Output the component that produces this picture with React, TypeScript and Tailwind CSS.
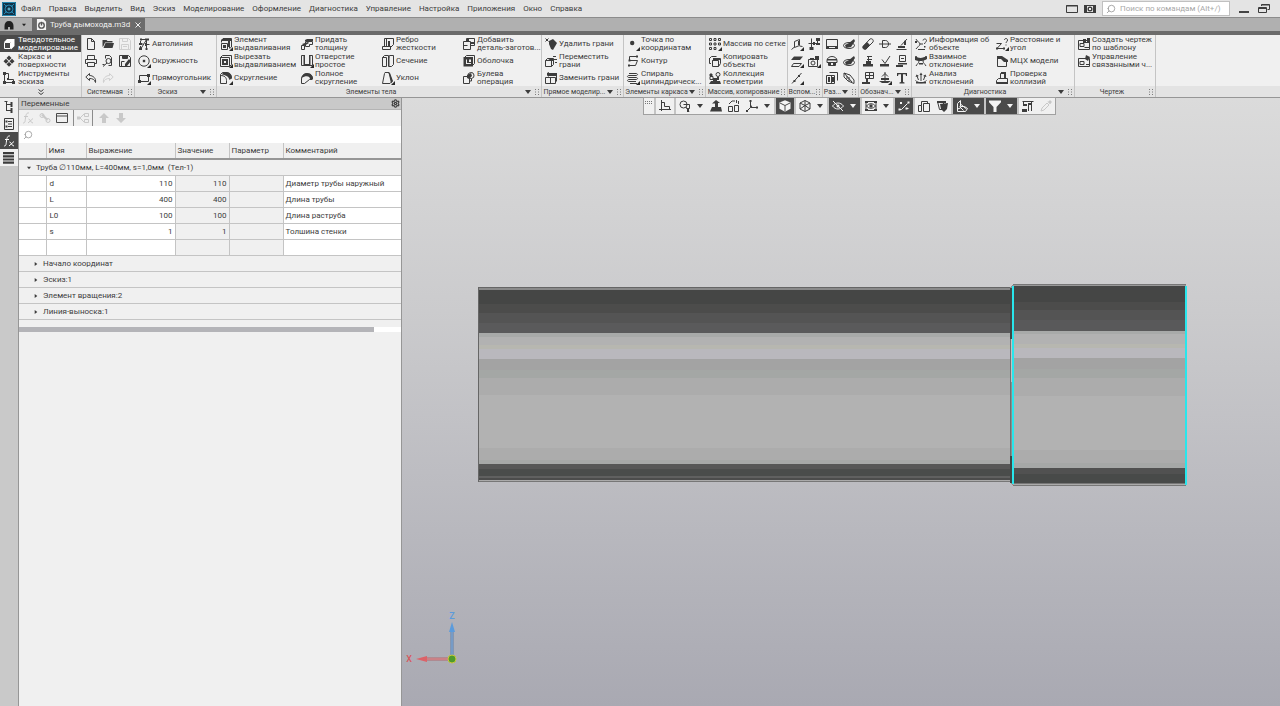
import { useState } from 'react';
import { Settings, Search } from 'lucide-react';

type Shape = { s?: string; f?: string; w?: string; k?: string };

// Контуры значков на сетке 12x12: s - линии, f - заливка, w - светлая заливка, k - темные линии поверх
const shapes: Record<string, Shape> = {
  solid: { s: 'M1.5 4.5h6v6h-6z', f: 'M1 4l3-3h7.5v7L8 11.5V4z' },
  surface: { f: 'M6 .5L8.5 3 6 5.5 3.5 3zM3 3.7l2.5 2.5L3 8.7.5 6.2zM9 3.7l2.5 2.5L9 8.7 6.5 6.2zM6 6.9l2.5 2.3L6 11.7 3.5 9.2z' },
  sketch: { s: 'M1.5 1.5h4v6h5v3h-9z', f: 'M0 0h3v3H0zM0 9h3v3H0zM9 9h3v3H9zM4 6h2v2H4z' },
  file: { s: 'M2.5.5h4l3 3v8h-7zM6.5.5v3h3' },
  open: { f: 'M.5 2h4l1 1h5v1.5H3L1.5 8 .5 9zM3.5 5H12l-1.5 5H1.5z' },
  save: { s: 'M.5.5h9l2 2v9H.5zM3.5.5v3h5v-3M2.5 11.5v-5h7v5M4 8.5h4' },
  print: { s: 'M2.5 4.5v-4h7v4M2.5 8.5h-2v-4h11v4h-2M2.5 7.5h7v4h-7z' },
  preview: { s: 'M3.5 3.5v-3h4l2 2v8h-3M4 6a2.5 2.5 0 105 0a2.5 2.5 0 10-5 0M5 8l-4 3.5M.5 9.5h2' },
  saveas: { s: 'M.5.5h9l2 2v9H.5zM3.5.5v3h5v-3M2.5 11.5v-5h3', f: 'M10 4l2 2-4 5-2 1V9zM4 1h4v2H4z' },
  undo: { s: 'M4.5 1.5L.8 5l3.7 3.5v-2c3 0 5 .8 6 4 .8-4-2.2-7-6-7z' },
  redo: { s: 'M7.5 1.5L11.2 5 7.5 8.5v-2c-3 0-5 .8-6 4-.8-4 2.2-7 6-7z' },
  auto: { s: 'M4 1.5h3M2.5 3v3h3M8.5 2v9M8.5 6.5h3M3 10.5l5-8M2.5 8v3', f: 'M2 .5h2v2H2zM7 .5h4v2H7zM1 5h3v2H1zM1 9.5h3V12H1zM7 5h2v3H7zM7.5 10h2v2h-2z' },
  circle: { s: 'M.8 6a5.2 5.2 0 1010.4 0a5.2 5.2 0 10-10.4 0', f: 'M4.8 4.8h2.4v2.4H4.8z' },
  rect: { s: 'M1.5 3.5h9v6h-9z', f: 'M0 8h3v3H0zM9 2h3v3H9z' },
  extrude: { s: 'M1.5 5.5h6v6h-6zM1.5 4.5V2L3 .5h8.5V9l-2 1.5M9.5 10V2.5h-7', f: 'M2 1h9v2H2zM8 3h2v6H8zM3 7h3v3H3z' },
  cutout: { s: 'M.5 2.5l2-2h9v9l-2 2h-9zM.5 2.5h9v9', f: 'M2 4h6v6H2z', w: 'M4 6h2v2H4z' },
  fillet: { s: 'M.5 11.5v-9l2-2H6c3 0 5.5 2.5 5.5 6M.5 11.5h6v-3c0-3-2-5-6-5', f: 'M3 0h3c4 0 6 3 6 6L9.5 8C9 5 6 3 2 2.5z' },
  thick: { s: 'M4.5 3.5h7v3h-3v2h-4zM.5 7.5h3v4h-3z', f: 'M4 2l2-1h6v2H4zM1 6l6-2 1 1-5 3z' },
  hole: { s: 'M.5.5h3v10h-3zM8.5.5h3v10h-3zM3.5 3v7.5h5V3', f: 'M2.5 0H4v11H2.5zM8 0h1.5v11H8zM4 9h4v2H4z' },
  fullFillet: { s: 'M.5 11.5V7c0-3 2-5 5-5h2c2 0 4 2 4 5M.5 11.5h3l5-4h3', f: 'M.5 6C1 3 3 1 6 1c4 0 6 3 6 6H9C9 4 5 3 .5 6z' },
  rib: { s: 'M2.5 8.5v-8h9v6l-3 3M.5 8.5h8v3h-8zM4.5.5v8', f: 'M6 3h2v5H6zM2 8h7v1H2z' },
  section: { s: 'M.5 2.5h4v9h-4zM6.5 3.5l1-3h4v9l-2 2h-3zM.5 2.5l2-2h4v8', f: 'M6 2h1.5v9H6z' },
  draft: { s: 'M3 .5h4l3 9-2 2H.5l2-10z', f: 'M6 0l2 1 3 8-2 2.5-2-9z' },
  blank: { s: 'M.5 3.5h7v8h-7zM3.5 3.5v-3h8v7h-4M.5 7.5h4', f: 'M4 0h2v4h5.5v2H8V4H4z' },
  shell: { s: 'M1.5 2.5l2-2h8v8l-2 2', f: 'M.5 2H10v9.5H.5z', w: 'M3 4.5h1V9H3zM4 8h4v1H4zM6 4.5h2V7H6z' },
  bool: { s: 'M.5 4.5h6v7h-6zM5 4a3 3 0 106-1a3 3 0 00-6 1M6.5 9h2V6.5', f: 'M4 3l4-2 1 3-3 3-2-1z' },
  delFace: { s: 'M.5.5l3 3M3.5.5l-3 3', f: 'M4 3l4-2 4 4-4 7-2-1-2-5z' },
  moveFace: { s: 'M.5 5.5h6v6h-6zM.5 5.5l2-2h6v6l-2 2M8 1.5h3M9 4.5h3M10 7.5h2', f: 'M2 3h6v3H6z' },
  swapFace: { s: 'M.5 5.5h10v6H.5zM2.5 3.5h9v6M5.5 5.5v6', f: 'M2 1l2-1v1h8v3H4v1L2 3z' },
  point: { f: 'M3 5a2.2 2.2 0 104.4 0a2.2 2.2 0 10-4.4 0' },
  contour: { s: 'M11 1.5H2.5v4h8l-2 5H2', f: 'M9 .5h2v2H9zM1 9.5h2v2H1zM1.5 4.5h2v2h-2z' },
  spiral: { s: 'M2 1.5h7c2 0 2 2 0 2H2c-2 0-2 2 0 2h7c2 0 2 2 0 2H2c-2 0-2 2 0 2h7M3 11.5h7' },
  array: { s: 'M.5.5h2v2h-2zM5 .5h2v2H5zM9.5.5h2v2h-2zM.5 5h2v2h-2zM5 5h2v2H5zM9.5 5h2v2h-2zM.5 9.5h2v2h-2zM5 9.5h2v2H5z' },
  copy: { s: 'M3.5 5.5l2-2h6v5l-2 3h-6zM3.5 5.5h6v6M.5 3v5.5H2M.5 3.5l2-2h5', f: 'M4 3h7v2H4z' },
  collect: { s: 'M7 2.5a2 2 0 104 0a2 2 0 10-4 0M1 4.5h3v3H1z', f: 'M0 3l2-2 2 2-2 2zM4 6h4v3H4zM2 9h9l1 3H0zM8 5h2v3H8z' },
  plane: { s: 'M3.5 3.5l5-2v6l-5 2zM.5 11.5l3-2.5M8.5 8l3 .5', f: 'M7 3h2v4H7z' },
  csys: { s: 'M3.5.5v9M.5 5.5h9M9.5 1v6', f: 'M1.5 9h4v3h-4zM5 4h2v3H5zM8 0h4v3H8zM8 5h4v2H8z' },
  layers: { s: 'M2.5 8.5h8L8 11.5H.5z', f: 'M3 1.5h9L9 5H0z' },
  camera: { s: 'M.5 4.5h9v7h-9zM3 8a2 2 0 104 0a2 2 0 10-4 0', f: 'M2 3h4v2H2zM7 1h4v4H7z' },
  axis: { s: 'M1 11.5L10.5 1', f: 'M2.5 8h2v2h-2zM7 3h2v2H7z' },
  monitor: { s: 'M.5 1.5h11v9H.5z', f: 'M0 8h3v3H0zM9 8h3v3H9zM2 8h8v1H2z' },
  disc: { s: 'M.5 7.5a5.5 3 0 1011 0a5.5 3 0 10-11 0', f: 'M2 7l4-2 5-4 1 2-4 6-5 1z' },
  helm: { s: 'M1 5.5a5 4 0 0110 0v2H1zM2.5 8v2.5h7V8', f: 'M1 4h10v1.5H1zM3 7h2v3H3zM7 7h2v3H7z' },
  stack: { s: 'M.5 3.5h8v8h-8zM3.5.5h8v8M5.5 3v8', f: 'M2 5h2v5H2zM6 5h2v5H6z' },
  leaf: { s: 'M1 1l6 2 4 5v3.5L5 9 1 5zM1 1l8 9M4 4v3M6 5v4' },
  pin: { s: 'M1 8.5L8 1c2-1 4 1 3 3l-7 7c-2 1-4-1-3-2.5z', f: 'M1 8l4-4 3 3-4 4.5C2 12 0 10 1 8z' },
  dim: { s: 'M3.5 2.5h3c4 0 4 7 0 7h-3zM0 6h12' },
  rough: { s: 'M.5 11.5h10M5 7.5L11 1', f: 'M2 8h7v2H2zM8 3l2-1v5H8z' },
  mark: { s: 'M5 1.5h5M5 4.5h5M6.5 1v7', f: 'M1 9h10v2.5H1zM4 6h5v3H4z' },
  check: { s: 'M3 4.5l3 4L11 1', f: 'M1 9h9v2.5H1z' },
  stamp: { s: 'M3.5.5h6v6h-6zM5 3.5h3', f: 'M2 8h9v1.5H2zM0 10h7v2H0z' },
  table: { s: 'M3.5.5h8v6h-8zM3.5 3.5h8M7.5.5v6', f: 'M4 7h2v3H4zM0 10h8v2H0z' },
  weld: { s: 'M6 0v10M3 4.5l3-3 3 3', f: 'M2 6h8v2H2zM0 9h12l-3 2H3z' },
  textTool: { f: 'M1 1h10v3h-1L9.5 2.2H7V10l1.5.5v1h-5v-1L5 10V2.2H2.5L2 4H1z' },
  info: { s: 'M1 1c1 3 4 3 4 5s-3 3-4 5M5 6h3M8 2.5c0-2 3.5-2 3.5 0S9.5 4 9.5 6M3 11.5h7', f: 'M0 3h2v2H0zM9 8h1.5v1.5H9z' },
  mutual: { s: 'M1 1c1 3 3 3 3 5s-2 3-3 5M11 1C10 4 8 4 8 6s2 3 3 5', f: 'M0 1c4 3 8 2 12 0v3C8 6.500 3 6.500 0 5zM4 8h4v1.5H4z' },
  deviation: { s: 'M.5 8.5c3 3 8 3 11 0M3.5 8L2 4M6 9V2M8.5 8L10 4', f: 'M.5 5l1-2.5L4 4zM4.5 3L6 .5 7.5 3zM8 4l2.5-1.5 1 2.5zM1 10h10v1.5H1z' },
  distance: { s: 'M.5 5.5h5L1 10.5h7M8.5 2c0-2 3-2 3 0S10 3.5 10 5', f: 'M9.5 6.5h1v1h-1zM0 9.5h2v2H0zM7 9.5h2v2H7z' },
  mcx: { s: 'M1.5 3.5v8h9V5', f: 'M1 1h5l6 4v2H8L5 4H1z' },
  collide: { s: 'M4.5 1.5h5v5h-5zM.5 8.5l2-2h9v4l-1 1H.5z', f: 'M5 0h5v7H8V2H5zM1 10h11v2H1z' },
  drawing: { s: 'M.5 2.5h11v9H.5zM2 5.5h4v3H2zM6.5 9.5h5', f: 'M5 1h3v4H5zM9 0h3v5H9zM7 4h4v1H7z' },
  linked: { s: 'M.5 3.5h11v8H.5zM2 6.5h4v3H2zM8 9.5h3', f: 'M8 0l4 2-2 4-3-2z' },
  axes: { s: 'M2.5 0v11M0 9.5h12M2.5 2.5h3v4h5v3' },
  zoomBox: { s: 'M1 4.5a3.5 3.5 0 107 0a3.5 3.5 0 10-7 0M7 7l3 4.5M4.5 4.5h6v4h-3', f: 'M8 9h2v3H8z' },
  orient: { f: 'M6 0l4 3H8v4h3l1 4.5H0L2 7h3V3.5H2z' },
  rotate: { s: 'M.5 6.5h4v5h-4zM6.5 5.5h4v6h-4zM8.5 0v3M10.5 1v3M1 4l3-3h3' },
  triad: { s: 'M4.5 1v6.5L1 11M4.5 7.5H11', f: 'M3.5 0h2v2h-2zM10 6.5h2v2h-2zM0 10h2v2H0zM5 5l2 3H5z' },
  cube: { f: 'M6 .3l5.5 2.2v6.3L6 11.7.5 8.8V2.5z', k: 'M1 3l5 2.5L11 3M6 5.5v6' },
  wire: { s: 'M6 .5L11 3v6l-5 2.5L1 9V3zM1 3l5 2.5L11 3M6 .5v11M1 9l5-3.5L11 9' },
  eyeOff: { s: 'M.5 6c3-4 8-4 11 0-3 4-8 4-11 0zM1 1l10 10', f: 'M4.5 6a1.5 1.5 0 103 0a1.5 1.5 0 10-3 0' },
  eyeBox: { s: 'M1 1.5h10v9H1zM1.5 6c2-3 7-3 9 0-2 3-7 3-9 0z', f: 'M0 1h3v2H0zM9 1h3v2H9zM0 9h3v2H0zM9 9h3v2H9zM4.5 4.5h3v3h-3z' },
  snap: { s: 'M1.5 9.5h2l6-6M8.5 8.5h2', f: 'M.5 8.5h2v2h-2zM2 2h2v2H2zM9.5 1.5h2v2h-2zM7.5 7.5h2v2h-2z' },
  boxes: { s: 'M.5 5.5h3v6h-3zM5.5 3.5h6v8h-6zM3.5 5.5v-4h6v2' },
  mask: { s: 'M1.5 1.5h6v8h-4z', f: 'M1 1h9v2H1zM4 4l8-1-1 6-3 3-3-3z' },
  ruler: { s: 'M1.5 3.5l3-3v6h4l3 2-2 3h-8zM4.5 4l6 5M3.5 6.5l4 4M1.5 9l3-1' },
  funnel: { f: 'M0 .5h12v1.8L7.5 7v5h-3V7L0 2.3z' },
  props: { s: 'M.5 1.5h11M1.5 2v4M6.5 4v7M9.5 2v9', f: 'M1 4h4v2H1zM0 9h5v3H0zM6 3h4v2H6z' },
  dropper: { s: 'M1 11l1-3 5-5 2 2-5 5zM8 1.5l2.5 2.5', f: 'M8 2l2-2 2 2-2 2z' },
  tree: { s: 'M3.5 0v10M3.5 3.5h5M3.5 9.5h5M1.5.5h3', f: 'M7.5 1h2v5h-2zM7.5 7h2v5h-2z' },
  list: { s: 'M1.5.5h9v11h-9zM5 3.5h4M5 6h4M5 8.5h4', f: 'M2.5 2.5h2v2h-2zM2.5 7.5h2v2h-2z' },
  bars: { f: 'M0 0h11v2.2H0zM0 3.2h11v2.2H0zM0 6.4h11v2.2H0zM0 9.6h11v2.2H0z' },
  fx: { s: 'M1 11c2 0 2-1 2.5-5S5 .5 7 1M2 4.5h4M6.5 7c2 0 2 4 4.5 4M11 6.5l-5 4.5' },
  link: { s: 'M1 3.5a2 2 0 104 0a2 2 0 10-4 0M7 8.5a2 2 0 104 0a2 2 0 10-4 0M4.5 5l3 2', f: 'M2 3l2-1 5 5-1 2z' },
  window: { s: 'M.5 1.5h11v9H.5zM.5 4h11' },
  graph: { s: 'M3 6l4-4M3 6l4 4M7.5 1.5h4v3h-4zM7.5 7.5h4v3h-4z', f: 'M0 4.5h3v3H0z' },
  up: { f: 'M6 1l5 5H8v5H4V6H1z' },
  down: { f: 'M6 11L1 6h3V1h4v5h3z' },
  screen: { s: 'M.5 2.5h11v7H.5z', f: 'M.5 2h11v1.5H.5z' },
  gearBox: { s: 'M.5 2.5h11v7H.5z', f: 'M0 2h3v8H0zM9 2h3v8H9zM3.5 6a2.5 2.5 0 105 0a2.5 2.5 0 10-5 0', w: 'M5 5h2v2H5z' },
  restore: { s: 'M3.5 3V1.5h8v5h-2M.5 4.5h8v5h-8zM.5 5.5h8M3.5 2h8' },
};

function Glyph({ name, more, className = '' }: { name: string; more?: boolean; className?: string }) {
  const shape = shapes[name];
  return (
    <svg viewBox="0 0 12 12" className={`h-3 w-3 shrink-0 overflow-visible ${className}`} aria-hidden="true">
      {shape.s && <path d={shape.s} fill="none" stroke="currentColor" strokeWidth="1" />}
      {shape.f && <path d={shape.f} fill="currentColor" />}
      {shape.w && <path d={shape.w} fill="#f0f0f0" />}
      {shape.k && <path d={shape.k} fill="none" stroke="#4a4a4a" strokeWidth="1" />}
      {more && <path d="M13 9v4H9z" fill="#2a2a2a" />}
    </svg>
  );
}

function Caret({ className = 'w-1.5' }: { className?: string }) {
  return (
    <svg viewBox="0 0 6 4" className={`h-1 shrink-0 ${className}`} aria-hidden="true">
      <path d="M0 0h6L3 4z" fill="currentColor" />
    </svg>
  );
}

function Grip() {
  return (
    <svg viewBox="0 0 4 6" className="h-1.5 w-1 shrink-0 text-[#7c7c7c]" aria-hidden="true">
      <path d="M0 0h1v1H0zM3 0h1v1H3zM0 2.5h1v1H0zM3 2.5h1v1H3zM0 5h1v1H0zM3 5h1v1H3z" fill="currentColor" />
    </svg>
  );
}

const menu = [
  'Файл', 'Правка', 'Выделить', 'Вид', 'Эскиз', 'Моделирование', 'Оформление',
  'Диагностика', 'Управление', 'Настройка', 'Приложения', 'Окно', 'Справка',
];

interface Tool {
  icon: string;
  label?: string[];
  title?: string;
  more?: boolean;
  off?: boolean;
}

interface Group {
  caption: string;
  width: string;
  drop?: boolean;
  tools: Tool[];
}

// Инструменты перечислены по столбцам, по три в каждом
const groups: Group[] = [
  {
    caption: 'Системная',
    width: 'w-[53px]',
    tools: [
      { icon: 'file', title: 'Создать' },
      { icon: 'print', title: 'Печать' },
      { icon: 'undo', title: 'Отменить' },
      { icon: 'open', title: 'Открыть' },
      { icon: 'preview', title: 'Предварительный просмотр' },
      { icon: 'redo', title: 'Повторить', off: true },
      { icon: 'save', title: 'Сохранить', off: true },
      { icon: 'saveas', title: 'Сохранить как' },
    ],
  },
  {
    caption: 'Эскиз',
    width: 'w-[82px]',
    drop: true,
    tools: [
      { icon: 'auto', label: ['Автолиния'] },
      { icon: 'circle', label: ['Окружность'], more: true },
      { icon: 'rect', label: ['Прямоугольник'], more: true },
    ],
  },
  {
    caption: 'Элементы тела',
    width: 'w-[325px]',
    drop: true,
    tools: [
      { icon: 'extrude', label: ['Элемент', 'выдавливания'], more: true },
      { icon: 'cutout', label: ['Вырезать', 'выдавливанием'], more: true },
      { icon: 'fillet', label: ['Скругление'], more: true },
      { icon: 'thick', label: ['Придать', 'толщину'] },
      { icon: 'hole', label: ['Отверстие', 'простое'], more: true },
      { icon: 'fullFillet', label: ['Полное', 'скругление'] },
      { icon: 'rib', label: ['Ребро', 'жесткости'] },
      { icon: 'section', label: ['Сечение'] },
      { icon: 'draft', label: ['Уклон'], more: true },
      { icon: 'blank', label: ['Добавить', 'деталь-заготов...'] },
      { icon: 'shell', label: ['Оболочка'] },
      { icon: 'bool', label: ['Булева', 'операция'] },
    ],
  },
  {
    caption: 'Прямое моделир...',
    width: 'w-[82px]',
    drop: true,
    tools: [
      { icon: 'delFace', label: ['Удалить грани'] },
      { icon: 'moveFace', label: ['Переместить', 'грани'] },
      { icon: 'swapFace', label: ['Заменить грани'] },
    ],
  },
  {
    caption: 'Элементы каркаса',
    width: 'w-[82px]',
    drop: true,
    tools: [
      { icon: 'point', label: ['Точка по', 'координатам'], more: true },
      { icon: 'contour', label: ['Контур'] },
      { icon: 'spiral', label: ['Спираль', 'цилиндрическ...'], more: true },
    ],
  },
  {
    caption: 'Массив, копирование',
    width: 'w-[82px]',
    tools: [
      { icon: 'array', label: ['Массив по сетке'], more: true },
      { icon: 'copy', label: ['Копировать', 'объекты'] },
      { icon: 'collect', label: ['Коллекция', 'геометрии'] },
    ],
  },
  {
    caption: 'Вспом...',
    width: 'w-[35px]',
    tools: [
      { icon: 'plane', title: 'Плоскость', more: true },
      { icon: 'layers', title: 'Смещенная плоскость', more: true },
      { icon: 'axis', title: 'Ось', more: true },
      { icon: 'csys', title: 'Система координат' },
      { icon: 'camera', title: 'Вид', more: true },
    ],
  },
  {
    caption: 'Раз...',
    width: 'w-[36px]',
    drop: true,
    tools: [
      { icon: 'monitor', title: 'Разместить' },
      { icon: 'helm', title: 'Зона' },
      { icon: 'stack', title: 'Слои' },
      { icon: 'disc', title: 'Диск' },
      { icon: 'disc', title: 'Диск со смещением' },
      { icon: 'leaf', title: 'Разнести' },
    ],
  },
  {
    caption: 'Обознач...',
    width: 'w-[53px]',
    drop: true,
    tools: [
      { icon: 'pin', title: 'Резьба' },
      { icon: 'mark', title: 'База' },
      { icon: 'table', title: 'Допуск формы' },
      { icon: 'dim', title: 'Размер' },
      { icon: 'check', title: 'Клеймение' },
      { icon: 'weld', title: 'Сварка', more: true },
      { icon: 'rough', title: 'Шероховатость' },
      { icon: 'stamp', title: 'Маркировка' },
      { icon: 'textTool', title: 'Текст' },
    ],
  },
  {
    caption: 'Диагностика',
    width: 'w-[163px]',
    drop: true,
    tools: [
      { icon: 'info', label: ['Информация об', 'объекте'] },
      { icon: 'mutual', label: ['Взаимное', 'отклонение'] },
      { icon: 'deviation', label: ['Анализ', 'отклонений'] },
      { icon: 'distance', label: ['Расстояние и', 'угол'], more: true },
      { icon: 'mcx', label: ['МЦХ модели'] },
      { icon: 'collide', label: ['Проверка', 'коллизий'] },
    ],
  },
  {
    caption: 'Чертеж',
    width: 'w-[81px]',
    tools: [
      { icon: 'drawing', label: ['Создать чертеж', 'по шаблону'] },
      { icon: 'linked', label: ['Управление', 'связанными ч...'] },
    ],
  },
];

const modes = [
  { icon: 'solid', label: ['Твердотельное', 'моделирование'] },
  { icon: 'surface', label: ['Каркас и', 'поверхности'] },
  { icon: 'sketch', label: ['Инструменты', 'эскиза'] },
];

function Lines({ lines }: { lines: string[] }) {
  return (
    <span className="flex flex-col text-left leading-[8px]">
      {lines.map((line) => (
        <span key={line}>{line}</span>
      ))}
    </span>
  );
}

function RibbonGroup({ group }: { group: Group }) {
  return (
    <section aria-label={group.caption} className={`flex shrink-0 flex-col border-r border-[#c4c4c4] ${group.width}`}>
      <div className="grid h-[51px] auto-cols-fr grid-flow-col grid-rows-3">
        {group.tools.map((tool) =>
          tool.label ? (
            <button key={tool.icon} type="button" className="flex min-w-0 items-center gap-0.5 pl-[3px] whitespace-nowrap hover:bg-white">
              <Glyph name={tool.icon} more={tool.more} />
              <Lines lines={tool.label} />
            </button>
          ) : (
            <button
              key={tool.title}
              type="button"
              aria-label={tool.title}
              className={`flex items-center justify-center hover:bg-white ${tool.off ? 'text-[#cfcfcf]' : ''}`}
            >
              <Glyph name={tool.icon} more={tool.more} />
            </button>
          ),
        )}
      </div>
      <div className="flex h-[11px] items-center bg-[#e3e3e3] pr-0.5 text-[7px] leading-[10px]">
        <span className="flex-1 text-center whitespace-nowrap">{group.caption}</span>
        {group.drop && <Caret className="mr-1 w-1.5" />}
        <Grip />
      </div>
    </section>
  );
}

interface ViewItem {
  icon: string;
  title: string;
  drop?: boolean;
  off?: boolean;
}

const viewGroups: { dark?: boolean; items: ViewItem[] }[] = [
  { items: [{ icon: 'axes', title: 'Ориентация эскиза' }] },
  {
    items: [
      { icon: 'zoomBox', title: 'Масштаб', drop: true },
      { icon: 'orient', title: 'Нормально к' },
      { icon: 'rotate', title: 'Повернуть' },
      { icon: 'triad', title: 'Ориентация', drop: true },
    ],
  },
  { dark: true, items: [{ icon: 'cube', title: 'Полутоновое' }] },
  { items: [{ icon: 'wire', title: 'Каркас', drop: true }] },
  { dark: true, items: [{ icon: 'eyeOff', title: 'Скрыть', drop: true }] },
  { items: [{ icon: 'eyeBox', title: 'Показать', drop: true }] },
  { dark: true, items: [{ icon: 'snap', title: 'Привязки' }] },
  { items: [{ icon: 'boxes', title: 'Компоненты' }, { icon: 'mask', title: 'Сечение модели' }] },
  { dark: true, items: [{ icon: 'ruler', title: 'Измерения', drop: true }] },
  { dark: true, items: [{ icon: 'funnel', title: 'Фильтры', drop: true }] },
  { items: [{ icon: 'props', title: 'Свойства' }, { icon: 'dropper', title: 'Пипетка', off: true }] },
];

function ViewToolbar() {
  return (
    <div role="toolbar" aria-label="Вид" className="flex h-[18px] gap-0.5 border border-[#a0a0a0] bg-[#c4c4c4]">
      <div className="flex w-[10px] justify-center bg-[#f0f0f0] pt-[3px]">
        <svg viewBox="0 0 8 3" className="h-[3px] w-2 text-[#777]" aria-hidden="true">
          <path d="M0 0h1v1H0zM2 0h1v1H2zM4 0h1v1H4zM6 0h1v1H6zM0 2h1v1H0zM2 2h1v1H2zM4 2h1v1H4zM6 2h1v1H6z" fill="currentColor" />
        </svg>
      </div>
      {viewGroups.map((group) => (
        <div
          key={group.items[0].icon}
          className={`flex ${group.dark ? 'bg-[#4a4a4a] text-[#f4f4f4]' : 'bg-[#f0f0f0] text-[#3c3c3c]'}`}
        >
          {group.items.map((item) => (
            <button
              key={item.icon}
              type="button"
              aria-label={item.title}
              className={`flex items-center ${item.off ? 'text-[#c8c8c8]' : ''}`}
            >
              <span className="flex w-[18px] justify-center">
                <Glyph name={item.icon} />
              </span>
              {item.drop && (
                <span className="flex w-[13px] justify-center">
                  <Caret />
                </span>
              )}
            </button>
          ))}
        </div>
      ))}
    </div>
  );
}

const variables = [
  { name: 'd', expr: '110', value: '110', comment: 'Диаметр трубы наружный' },
  { name: 'L', expr: '400', value: '400', comment: 'Длина трубы' },
  { name: 'L0', expr: '100', value: '100', comment: 'Длина раструба' },
  { name: 's', expr: '1', value: '1', comment: 'Толшина стенки' },
  { name: '', expr: '', value: '', comment: '' },
];

const branches = ['Начало координат', 'Эскиз:1', 'Элемент вращения:2', 'Линия-выноска:1'];

function VariablesPanel() {
  const [query, setQuery] = useState('');

  return (
    <aside className="flex w-[384px] shrink-0 flex-col border-r border-l border-[#969696] bg-[#f0f0f0]">
      <header className="flex h-3 items-center justify-between border-b border-[#b4b4b4] bg-[#c9c9c9] pr-px pl-0.5">
        <h2>Переменные</h2>
        <button type="button" aria-label="Настройка панели">
          <Settings className="h-[9px] w-[9px]" strokeWidth={3} />
        </button>
      </header>
      <div className="flex h-4 items-center gap-[5px] pl-[3px] text-[#c9c9c9]">
        <button type="button" aria-label="Вставить функцию"><Glyph name="fx" /></button>
        <button type="button" aria-label="Вставить ссылку"><Glyph name="link" /></button>
        <button type="button" aria-label="Окно" className="text-[#4a4a4a]"><Glyph name="window" /></button>
        <button type="button" aria-label="Зависимости" className="flex h-4 items-center border-x border-[#8c8c8c] px-[3px]"><Glyph name="graph" /></button>
        <button type="button" aria-label="Выше"><Glyph name="up" /></button>
        <button type="button" aria-label="Ниже"><Glyph name="down" /></button>
      </div>
      <label className="flex h-[17px] items-center gap-1 bg-white pl-1">
        <Search className="h-2.5 w-2.5 -scale-x-100 text-[#9a9a9a]" />
        <input
          aria-label="Поиск переменной"
          value={query}
          onChange={(e) => setQuery(e.target.value)}
          className="min-w-0 flex-1 outline-none"
        />
      </label>

      <table className="w-full table-fixed border-collapse text-left">
        <colgroup>
          <col className="w-[27px]" />
          <col className="w-10" />
          <col className="w-[89px]" />
          <col className="w-[54px]" />
          <col className="w-[54px]" />
          <col />
        </colgroup>
        <thead>
          <tr className="h-4 border-b-2 border-[#969696]">
            <th aria-label="Статус" />
            {['Имя', 'Выражение', 'Значение', 'Параметр', 'Комментарий'].map((title) => (
              <th key={title} className="border-l border-l-[#c4c4c4] p-0 pt-px pl-0.5 font-normal">{title}</th>
            ))}
          </tr>
        </thead>
        <tbody>
          <tr className="h-4 border-b border-[#c4c4c4]">
            <td colSpan={6} className="p-0 pt-px pl-2">
              <button type="button" className="flex items-center gap-[5px]">
                <Caret className="w-1" />
                <span className="whitespace-pre">Труба ∅110мм, L=400мм, s=1,0мм  (Тел-1)</span>
              </button>
            </td>
          </tr>
          {variables.map((row) => (
            <tr key={row.name} className="h-4 border-b border-[#c4c4c4] bg-white">
              <td className="p-0" />
              <td className="border-l border-[#c4c4c4] p-0 pt-px pl-[3px]">{row.name}</td>
              <td className="border-l border-[#c4c4c4] p-0 pt-px pr-0.5 text-right">{row.expr}</td>
              <td className="border-l border-[#c4c4c4] bg-[#f0f0f0] p-0 pt-px pr-0.5 text-right">{row.value}</td>
              <td className="border-l border-[#c4c4c4] bg-[#f0f0f0] p-0" />
              <td className="border-l border-[#c4c4c4] p-0 pt-px pl-0.5">{row.comment}</td>
            </tr>
          ))}
          {branches.map((branch) => (
            <tr key={branch} className="h-4 border-b border-[#c4c4c4]">
              <td colSpan={6} className="p-0 pt-px pl-[15px]">
                <button type="button" className="flex items-center gap-[5px]">
                  <Caret className="w-1 -rotate-90" />
                  {branch}
                </button>
              </td>
            </tr>
          ))}
        </tbody>
      </table>
      <div className="mt-[7px] bg-white">
        <div className="h-[5px] w-[93%] bg-[#b4b4b8]" />
      </div>
    </aside>
  );
}

// Полосы освещенности: нижняя граница и цвет
const pipeBands: [number, string][] = [
  [288, '#666666'], [290, '#8a8a8a'], [304, '#454645'], [313, '#4c4c4b'], [323, '#545454'], [333, '#5a5a5b'],
  [337, '#a8aaa9'], [345, '#b2b2b2'], [349, '#b7b7b0'], [359, '#b9b8bd'], [370, '#a3a3a3'], [378, '#a4a7a5'],
  [395, '#acacac'], [448, '#b2b2b2'], [460, '#acacac'], [464, '#a6a8a7'], [469, '#565656'], [476, '#4a4c4b'],
  [478, '#606060'], [480, '#4c4c4c'], [481, '#aaaaaa'], [482, '#777777'],
];
const socketBands: [number, string][] = [
  [285, '#777777'], [286, '#999999'], [302, '#454645'], [310, '#4c4c4b'], [320, '#545454'], [331, '#59595a'],
  [334, '#a8aaa9'], [344, '#b2b2b2'], [348, '#b7b7b0'], [358, '#b9b8bd'], [369, '#a3a3a3'], [378, '#a4a7a5'],
  [396, '#acacac'], [450, '#b2b2b2'], [463, '#acacac'], [468, '#a6a8a7'], [474, '#515151'], [483, '#484a49'],
  [484, '#777777'], [485, '#aaaaaa'], [486, '#777777'],
];

function Bands({ bands, top, x, width }: { bands: [number, string][]; top: number; x: number; width: number }) {
  return (
    <g shapeRendering="crispEdges">
      {bands.map(([bottom, color], i) => {
        const y = i === 0 ? top : bands[i - 1][0];
        return <rect key={bottom} x={x} y={y} width={width} height={bottom - y} fill={color} />;
      })}
    </g>
  );
}

function Model() {
  return (
    <svg viewBox="402 98 878 608" className="absolute inset-0 h-full w-full" role="img" aria-label="Труба дымохода">
      <Bands bands={pipeBands} top={287} x={478} width={533} />
      <path d="M478.5 287v195" stroke="#666" />
      <Bands bands={socketBands} top={284} x={1013} width={173} />
      <g shapeRendering="crispEdges">
        <path d="M1010 287l3-3v202l-3-4z" fill="#8e8e8e" />
        <path d="M1010 288h3v51h-3zM1010 456h3v27h-3z" fill="#414545" />
        <path d="M1011 339h2v43h-2z" fill="#c2c2c4" />
        <path d="M1010 339h1v117h-1z" fill="#707070" />
        <rect x="1012" y="286" width="2" height="198" fill="#28e6ec" />
        <rect x="1185" y="286" width="2" height="199" fill="#28e6ec" />
      </g>
      <path d="M451 631h2v26h-2z" fill="#8fb8e4" stroke="#5f7fa8" strokeWidth="1" />
      <path d="M452 622l3 10h-6z" fill="#5b9bdc" />
      <path d="M426 658h23v2h-23z" fill="#e59a9e" stroke="#b0686e" strokeWidth="1" />
      <path d="M416 659l11-3v6z" fill="#dc6268" />
      <circle cx="452" cy="659" r="4" fill="#4f9a2c" stroke="#c9c93c" />
      <text x="452" y="619" textAnchor="middle" fontSize="9" fontWeight="500" fill="#5b9bdc">Z</text>
      <text x="409" y="662" textAnchor="middle" fontSize="9" fontWeight="500" fill="#d8585e">X</text>
    </svg>
  );
}

const rail = [
  { icon: 'tree', title: 'Дерево' },
  { icon: 'list', title: 'Параметры' },
  { icon: 'fx', title: 'Переменные' },
  { icon: 'bars', title: 'Список' },
];

export default function App() {
  const [search, setSearch] = useState('');
  const [mode, setMode] = useState('solid');

  return (
    <div className="flex min-h-screen flex-col bg-[#f0f0f0] font-['Roboto','Noto_Sans',sans-serif] text-[8px] leading-[10px] text-[#3c3c3c]">
      <header className="flex h-[17px] items-center bg-[#e4e4e4] pr-2.5 pl-0.5">
        <svg viewBox="0 0 14 14" className="mr-[5px] h-3.5 w-3.5 shrink-0" aria-label="КОМПАС-3D">
          <path d="M0 0h14v14H0z" fill="#123247" />
          <path d="M.5.5h13v13H.5zM3 7a4 4 0 108 0a4 4 0 10-8 0M2 2l3 3M12 2L9 5M2 12l3-3M12 12L9 9" fill="none" stroke="#2487b0" />
          <path d="M5.5 7h3M7 5.5v3" stroke="#6fd0ea" />
        </svg>
        <nav className="flex flex-1 gap-2">
          {menu.map((item) => (
            <button key={item} type="button" className="whitespace-nowrap hover:text-black">{item}</button>
          ))}
        </nav>
        <div className="flex items-center gap-1.5">
          <button type="button" aria-label="Экран"><Glyph name="screen" /></button>
          <button type="button" aria-label="Параметры"><Glyph name="gearBox" /></button>
          <label className="flex h-[15px] w-[128px] items-center gap-1 border border-[#c0c0c0] bg-white pl-[3px]">
            <Search className="h-2.5 w-2.5 shrink-0 -scale-x-100 text-[#999]" />
            <input
              aria-label="Поиск по командам"
              placeholder="Поиск по командам (Alt+/)"
              value={search}
              onChange={(e) => setSearch(e.target.value)}
              className="min-w-0 flex-1 outline-none placeholder:text-[#a8a8a8]"
            />
          </label>
          <button type="button" aria-label="Свернуть" className="mx-[3px] flex h-3 w-2.5 items-end pb-0.5">
            <span className="h-0.5 w-full bg-[#444]" />
          </button>
          <button type="button" aria-label="Восстановить"><Glyph name="restore" /></button>
        </div>
      </header>

      <div className="flex h-[18px] border-t border-b-4 border-t-[#8c8c8c] border-b-[#6b6b6b] bg-[#b0b0b0]">
        <button type="button" aria-label="Главная" className="flex w-8 items-center gap-2 pl-1 text-[#222]">
          <svg viewBox="0 0 10 10" className="h-[10px] w-[10px] shrink-0" aria-hidden="true">
            <path d="M5 1C2 1 .5 3 .5 6v3.5H4V7h2v2.5h3.5V6C9.5 3 8 1 5 1z" fill="currentColor" />
          </svg>
          <Caret className="w-1" />
        </button>
        <div className="flex items-center gap-[3px] bg-[#6b6b6b] px-1 text-[#f0f0f0]">
          <svg viewBox="0 0 12 12" className="h-[11px] w-[11px]" aria-hidden="true">
            <path d="M1 0h7l3 3v9H1z" fill="#f4f4f4" />
            <path d="M3 7a3 3 0 106 0a3 3 0 10-6 0M6 7V3" fill="none" stroke="#555" strokeWidth="1.5" />
          </svg>
          <span>Труба дымохода.m3d</span>
          <button type="button" aria-label="Закрыть вкладку" className="ml-0.5">
            <svg viewBox="0 0 6 6" className="h-1.5 w-1.5" aria-hidden="true">
              <path d="M.5.5l5 5M5.5.5l-5 5" stroke="currentColor" />
            </svg>
          </button>
        </div>
      </div>

      <div className="flex overflow-hidden border-b border-[#969696]">
        <section aria-label="Режимы" className="flex w-[81px] shrink-0 flex-col">
          <div className="grid h-[51px] grid-rows-3">
            {modes.map((item) => (
              <button
                key={item.icon}
                type="button"
                onClick={() => setMode(item.icon)}
                className={`flex items-center gap-[3px] pl-[3px] ${mode === item.icon ? 'bg-[#4a4a4a] text-white' : ''}`}
              >
                <Glyph name={item.icon} />
                <Lines lines={item.label} />
              </button>
            ))}
          </div>
          <button type="button" aria-label="Развернуть" className="flex h-[11px] items-center justify-center bg-[#e3e3e3]">
            <svg viewBox="0 0 6 6" className="h-1.5 w-1.5" aria-hidden="true">
              <path d="M.5.5L3 2.5 5.5.5M.5 3.5L3 5.5 5.5 3.5" fill="none" stroke="currentColor" />
            </svg>
          </button>
        </section>
        <div className="flex border-l border-[#c4c4c4]">
          {groups.map((group) => (
            <RibbonGroup key={group.caption} group={group} />
          ))}
        </div>
        <div className="flex flex-1 flex-col justify-end">
          <div className="h-[11px] bg-[#e3e3e3]" />
        </div>
      </div>

      <main className="flex flex-1">
        <nav className="w-[18px] shrink-0 bg-[#c9c9c9]">
          {rail.map((item) => (
            <button
              key={item.icon}
              type="button"
              aria-label={item.title}
              className={`flex h-[17px] w-full items-center justify-center ${item.icon === 'fx' ? 'bg-[#4a4a4a] text-white' : 'bg-[#f0f0f0]'}`}
            >
              <Glyph name={item.icon} />
            </button>
          ))}
        </nav>
        <VariablesPanel />
        <div className="relative flex flex-1 items-start justify-center bg-linear-to-b from-[#dbdbdb] via-[#cbcbcd] via-35% to-[#a9a9b2] pl-4">
          <Model />
          <div className="relative -mt-px">
            <ViewToolbar />
          </div>
        </div>
      </main>
    </div>
  );
}
